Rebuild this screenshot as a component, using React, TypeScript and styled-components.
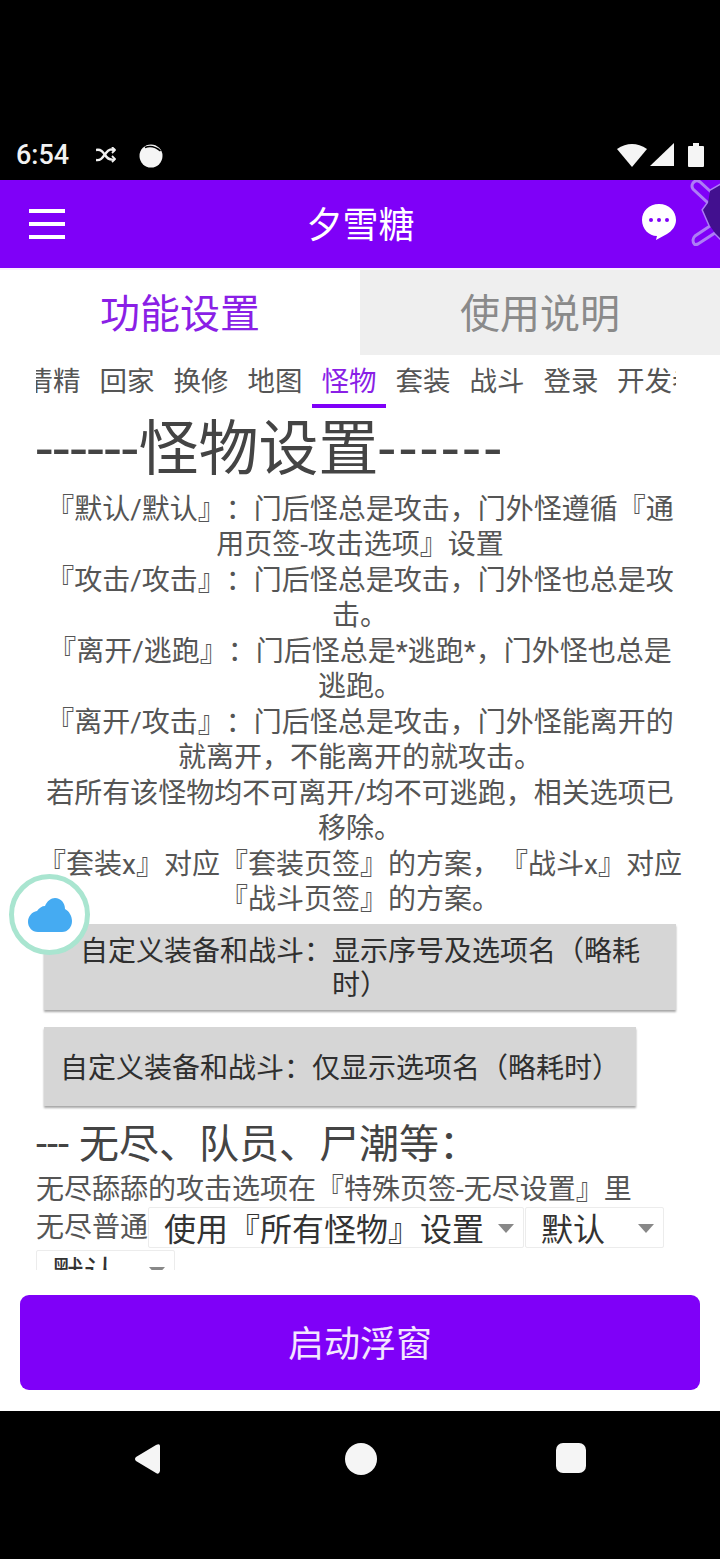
import styled, { createGlobalStyle } from 'styled-components';

const PURPLE = '#7f00f8';
const FONT = `Roboto, 'Noto Sans CJK SC', sans-serif`;

const subTabs = ['清精', '回家', '换修', '地图', '怪物', '套装', '战斗', '登录', '开发者'];

const notes = [
  '『默认/默认』：门后怪总是攻击，门外怪遵循『通用页签-攻击选项』设置',
  '『攻击/攻击』：门后怪总是攻击，门外怪也总是攻击。',
  '『离开/逃跑』：门后怪总是*逃跑*，门外怪也总是逃跑。',
  '『离开/攻击』：门后怪总是攻击，门外怪能离开的就离开，不能离开的就攻击。',
  '若所有该怪物均不可离开/均不可逃跑，相关选项已移除。',
  '『套装x』对应『套装页签』的方案，『战斗x』对应『战斗页签』的方案。',
];

const GlobalStyle = createGlobalStyle`
  html, body {
    margin: 0;
    padding: 0;
    background: #000;
  }
  * {
    box-sizing: border-box;
  }
`;

const Screen = styled.div`
  position: relative;
  width: 720px;
  height: 1559px;
  display: flex;
  flex-direction: column;
  overflow: hidden;
  background: #000;
  font-family: ${FONT};
  text-spacing-trim: space-all;
  color: #4a4a4a;
`;

const StatusBar = styled.div`
  height: 180px;
  padding: 133px 16px 0 16px;
  display: flex;
  align-items: flex-start;
  justify-content: space-between;
  color: #f2f2f2;
`;

const StatusGroup = styled.div`
  display: flex;
  align-items: center;
  height: 44px;
`;

const Clock = styled.span`
  font-size: 27px;
  font-weight: 500;
  margin-right: 27px;
`;

const ShuffleIcon = styled.svg`
  margin-right: 23px;
`;

const WifiIcon = styled.svg`
  margin-right: 3px;
`;

const SignalIcon = styled.svg`
  margin-right: 14px;
`;

const AppBar = styled.header`
  position: relative;
  height: 88px;
  flex: none;
  background: ${PURPLE};
  display: flex;
  align-items: center;
  justify-content: center;
  color: #fff;
  overflow: hidden;
`;

const AppTitle = styled.h1`
  margin: 3px 0 0 1px;
  font-size: 36px;
  font-weight: 400;
  line-height: 1;
`;

const Hamburger = styled.span`
  position: absolute;
  left: 29px;
  top: 29px;
  width: 36px;
  height: 30px;
  border-top: 4px solid #fff;
  border-bottom: 4px solid #fff;
  &::before {
    content: '';
    display: block;
    height: 4px;
    margin-top: 9px;
    background: #fff;
  }
`;

const ChatIcon = styled.svg`
  position: absolute;
  left: 641px;
  top: 23px;
`;

const Sticker = styled.svg`
  position: absolute;
  left: 690px;
  top: 0;
`;

const Divider = styled.div`
  height: 2px;
  flex: none;
  background: #fbeeff;
`;

const MainTabs = styled.nav`
  display: flex;
  height: 85px;
  flex: none;
  background: #fff;
`;

const MainTab = styled.div<{ $active?: boolean }>`
  flex: 1;
  display: flex;
  align-items: center;
  justify-content: center;
  padding-bottom: 4px;
  font-size: 40px;
  background: ${(p) => (p.$active ? '#fff' : '#efefef')};
  color: ${(p) => (p.$active ? '#8a1fe6' : '#8a8a8a')};
`;

const Body = styled.main`
  height: 1056px;
  flex: none;
  display: flex;
  flex-direction: column;
  background: #fff;
`;

const SubTabs = styled.div`
  margin: 0 44px 0 36px;
  height: 53px;
  flex: none;
  display: flex;
  overflow: hidden;
`;

const SubTabRow = styled.div`
  display: flex;
  margin-left: -20px;
  flex: none;
`;

const SubTab = styled.div<{ $active?: boolean }>`
  min-width: 74px;
  flex: none;
  display: flex;
  justify-content: center;
  padding: 7px 9px 0;
  white-space: nowrap;
  font-size: 27.5px;
  line-height: 40px;
  color: ${(p) => (p.$active ? '#8a1fe6' : '#555')};
  border-bottom: 4px solid ${(p) => (p.$active ? PURPLE : 'transparent')};
`;

const Scroller = styled.section`
  height: 862px;
  flex: none;
  padding: 0 36px;
  overflow: hidden;
`;

const Heading = styled.h2`
  margin: 5px 0 5px;
  font-size: 60px;
  font-weight: 400;
  line-height: 74px;
  white-space: nowrap;
  color: #444;
`;

const HeadingLead = styled.span`
  letter-spacing: 0.5px;
`;

const HeadingTail = styled.span`
  letter-spacing: 4.6px;
`;

const Note = styled.p`
  margin: 0 0 1px;
  font-size: 28px;
  line-height: 35px;
  text-align: center;
  color: #555;
`;

const NoteGroup = styled.div`
  margin-bottom: 7px;
`;

const ActionButton = styled.div<{ $width: number; $height: number }>`
  width: ${(p) => p.$width}px;
  height: ${(p) => p.$height}px;
  margin: 0 0 17px 8px;
  padding: 4px 14px 0;
  display: flex;
  align-items: center;
  justify-content: center;
  text-align: center;
  font-size: 28px;
  line-height: 34px;
  color: #2f2f2f;
  background: #d6d6d6;
  box-shadow: 0 2px 2px rgba(0, 0, 0, 0.35);
`;

const SubHeading = styled.h3`
  margin: -2px 0 0;
  font-size: 40px;
  font-weight: 400;
  line-height: 48px;
  color: #444;
`;

const Hint = styled.p`
  margin: 3px 0 0;
  font-size: 28px;
  line-height: 36px;
  color: #555;
`;

const SelectRow = styled.div`
  display: flex;
  flex-wrap: wrap;
  align-items: center;
  row-gap: 2px;
  margin-top: -1px;
`;

const RowLabel = styled.span`
  font-size: 28px;
  line-height: 41px;
  color: #555;
`;

const Select = styled.div<{ $width: number }>`
  position: relative;
  width: ${(p) => p.$width}px;
  height: 41px;
  padding: 0 0 2px 15px;
  margin-right: 1px;
  display: flex;
  align-items: center;
  font-size: 32px;
  color: #333;
  border: 1px solid #ececec;
  border-radius: 2px;
  background: #fff;
  &::after {
    content: '';
    position: absolute;
    right: 9px;
    top: 16px;
    border-left: 8px solid transparent;
    border-right: 8px solid transparent;
    border-top: 9px solid #888;
  }
`;

const Footer = styled.div`
  height: 141px;
  flex: none;
  padding: 25px 20px 21px;
  background: #fff;
`;

const StartButton = styled.div`
  height: 95px;
  display: flex;
  align-items: center;
  justify-content: center;
  padding-bottom: 4px;
  font-size: 36px;
  color: #f3e6ff;
  background: ${PURPLE};
  border-radius: 9px;
`;

const NavBar = styled.nav`
  flex: 1;
  display: flex;
  align-items: flex-start;
  justify-content: center;
  gap: 179px;
  padding: 32px 0 0 0;
  background: #000;
`;

const BackIcon = styled.svg`
  margin-right: 6px;
`;

const CloudBubble = styled.div`
  position: absolute;
  left: 9px;
  top: 874px;
  width: 81px;
  height: 81px;
  display: flex;
  align-items: center;
  justify-content: center;
  border: 5px solid #a9e5d0;
  border-radius: 50%;
  background: #fff;
`;

export default function App() {
  return (
    <Screen>
      <GlobalStyle />
      <StatusBar>
        <StatusGroup>
          <Clock>6:54</Clock>
          <ShuffleIcon width="20" height="16" viewBox="0 0 20 16" fill="none" stroke="#f2f2f2" strokeWidth="2.4">
            <path d="M0 3 C5 2 7 5 9 8 S14 14 19 12" />
            <path d="M0 13 C5 14 7 10 10 6 S15 2 19 3" />
            <path d="M16 0l3 3-3 3M16 9l3 3-3 3" strokeWidth="1.8" />
          </ShuffleIcon>
          <svg width="24" height="26" viewBox="0 0 24 26">
            <circle cx="12" cy="14" r="11.5" fill="#f5f5f5" />
            <path d="M6 5.5 Q14 2.5 21.5 9" fill="none" stroke="#000" strokeWidth="1.6" />
          </svg>
        </StatusGroup>
        <StatusGroup>
          <WifiIcon width="30" height="24" viewBox="0 0 30 24">
            <path d="M0 6 Q15 -4 30 6 L15 24 Z" fill="#f5f5f5" />
          </WifiIcon>
          <SignalIcon width="24" height="24" viewBox="0 0 24 24">
            <path d="M24 0V23H0Z" fill="#f5f5f5" />
          </SignalIcon>
          <svg width="16" height="24" viewBox="0 0 16 24">
            <path d="M5 0h6v3h4a1 1 0 0 1 1 1v19a1 1 0 0 1-1 1H1a1 1 0 0 1-1-1V4a1 1 0 0 1 1-1h4Z" fill="#f5f5f5" />
          </svg>
        </StatusGroup>
      </StatusBar>

      <AppBar>
        <Hamburger />
        <AppTitle>夕雪糖</AppTitle>
        <ChatIcon width="36" height="38" viewBox="0 0 36 38">
          <path d="M18 1C8 1 1 8 1 17s7 16 15 16l-1 4 11-6c5-3 9-8 9-14C35 8 28 1 18 1Z" fill="#fff" />
          <circle cx="10" cy="17" r="2" fill={PURPLE} />
          <circle cx="18" cy="17" r="2" fill={PURPLE} />
          <circle cx="26" cy="17" r="2" fill={PURPLE} />
        </ChatIcon>
        <Sticker width="30" height="70" viewBox="0 0 30 70">
          <path
            d="M3 3 Q6 -1 10 2 L20 11 L32 4 V60 L25 53 L8 64 Q3 66 3 60 Q3 58 5 56 L20 46 L13 30 L18 23 L3 9 Q1 6 3 3Z"
            fill={PURPLE}
            stroke="#ad7df5"
            strokeWidth="3"
          />
          <path d="M20 11 L32 4 V60 L25 53 L20 46 L13 30 L18 23Z" fill="#42108f" />
        </Sticker>
      </AppBar>
      <Divider />

      <MainTabs>
        <MainTab $active>功能设置</MainTab>
        <MainTab>使用说明</MainTab>
      </MainTabs>

      <Body>
        <SubTabs>
          <SubTabRow>
            {subTabs.map((name) => (
              <SubTab key={name} $active={name === '怪物'}>
                {name}
              </SubTab>
            ))}
          </SubTabRow>
        </SubTabs>

        <Scroller>
          <Heading>
            <HeadingLead>------</HeadingLead>怪物设置<HeadingTail>------</HeadingTail>
          </Heading>
          <NoteGroup>
            {notes.map((text) => (
              <Note key={text}>{text}</Note>
            ))}
          </NoteGroup>
          <ActionButton $width={632} $height={86}>
            自定义装备和战斗：显示序号及选项名（略耗时）
          </ActionButton>
          <ActionButton $width={592} $height={79}>
            自定义装备和战斗：仅显示选项名（略耗时）
          </ActionButton>
          <SubHeading>--- 无尽、队员、尸潮等：</SubHeading>
          <Hint>无尽舔舔的攻击选项在『特殊页签-无尽设置』里</Hint>
          <SelectRow>
            <RowLabel>无尽普通</RowLabel>
            <Select $width={376}>使用『所有怪物』设置</Select>
            <Select $width={139}>默认</Select>
            <Select $width={139}>默认</Select>
          </SelectRow>
        </Scroller>

        <Footer>
          <StartButton>启动浮窗</StartButton>
        </Footer>
      </Body>

      <NavBar>
        <BackIcon width="26" height="32" viewBox="0 0 26 32">
          <path d="M26 3 V28 Q25 32 22 30 L2 18 Q0 16 2 14 L22 2 Q26 0 26 3Z" fill="#f5f5f5" />
        </BackIcon>
        <svg width="32" height="32" viewBox="0 0 32 32">
          <circle cx="16" cy="16" r="16" fill="#f5f5f5" />
        </svg>
        <svg width="30" height="30" viewBox="0 0 30 30">
          <rect width="30" height="30" rx="7" fill="#f5f5f5" />
        </svg>
      </NavBar>

      <CloudBubble>
        <svg width="44" height="34" viewBox="0 0 44 34">
          <path
            d="M10 34 C4 34 0 29 0 24 C0 18 4 14 9 13 C11 10 14 8 17 8 C19 3 23 0 27 0 C33 0 37 5 37 11 C41 13 44 18 44 23 C44 29 40 34 34 34 Z"
            fill="#45abf2"
          />
        </svg>
      </CloudBubble>
    </Screen>
  );
}
